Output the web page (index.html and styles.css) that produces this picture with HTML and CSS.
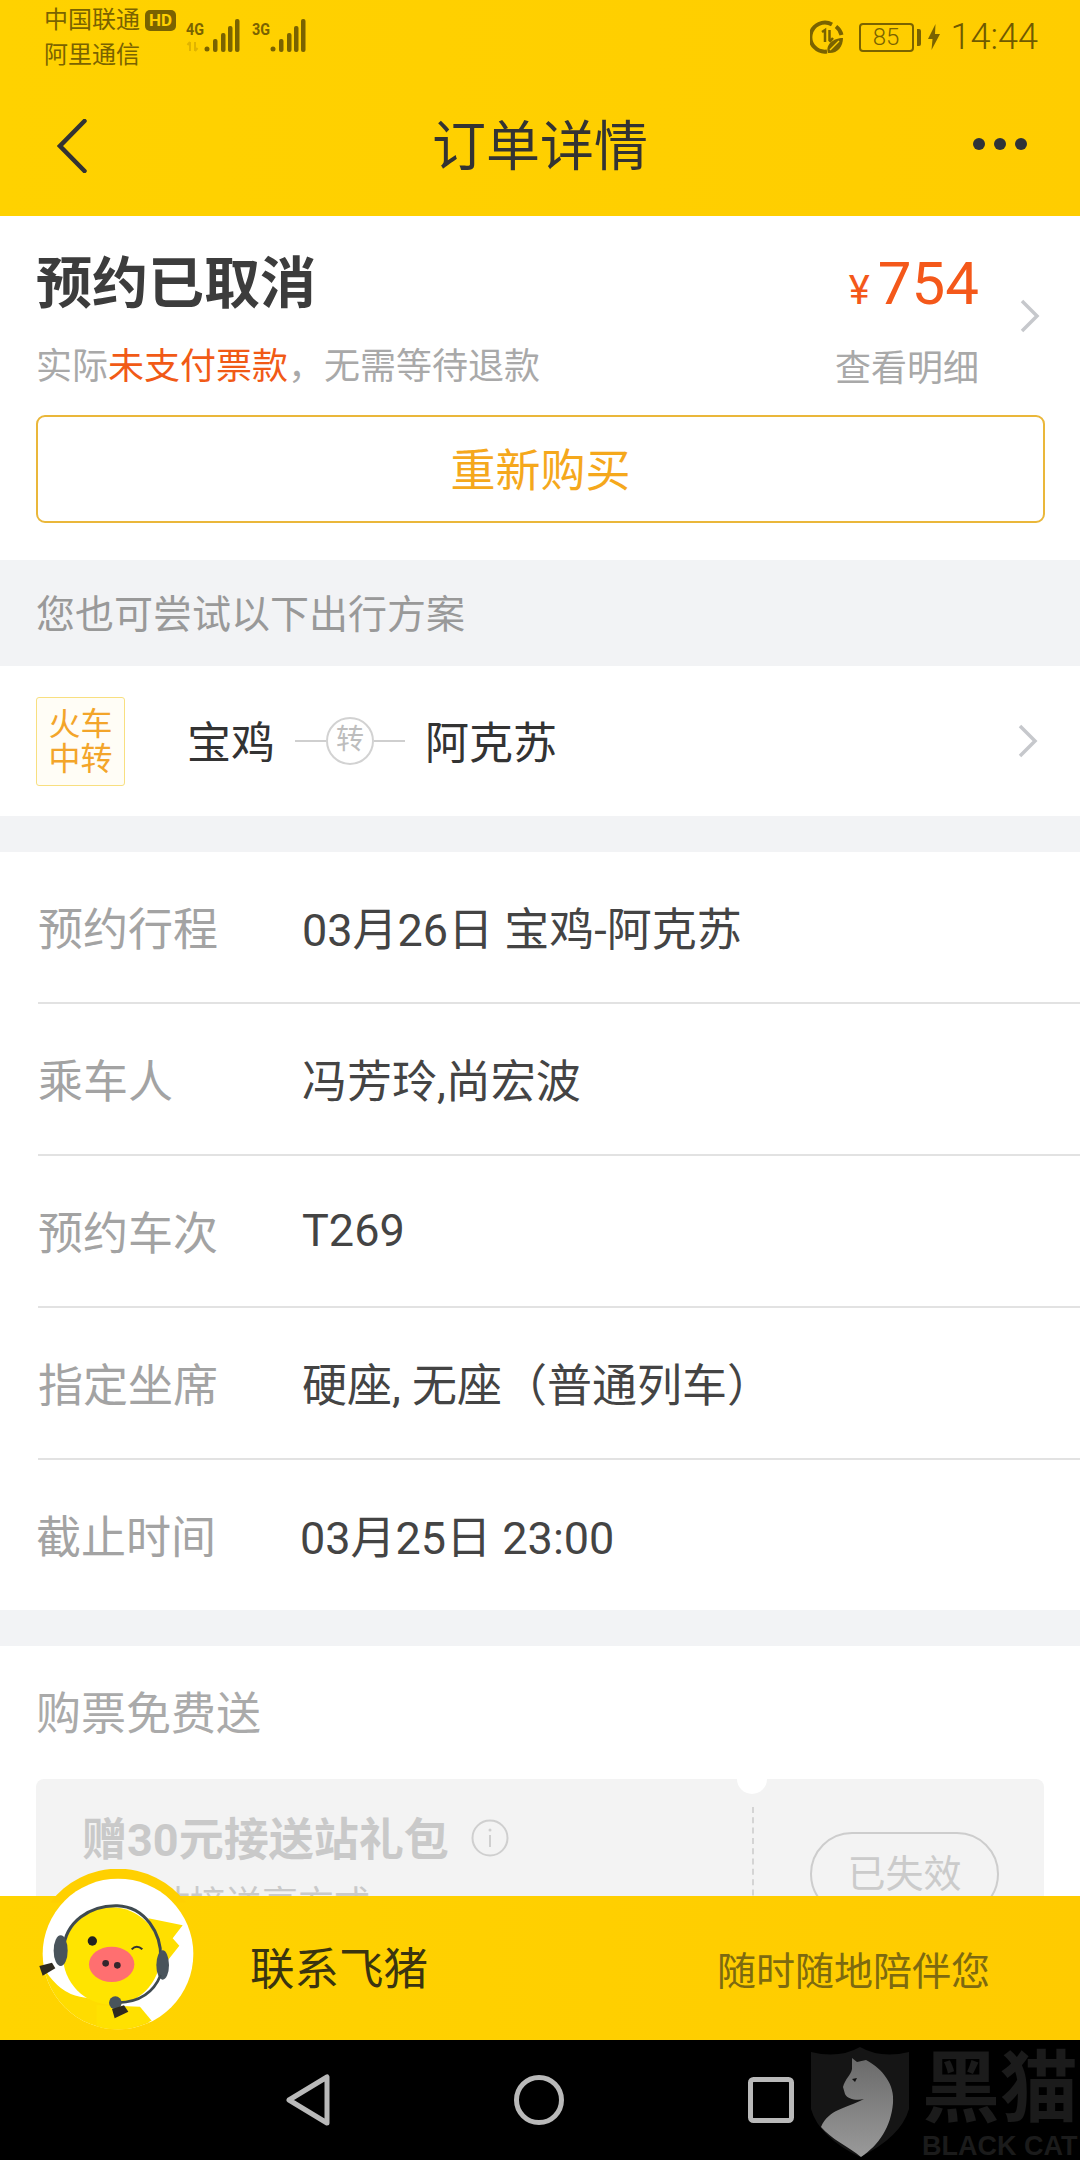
FILE: index.html
```html
<!DOCTYPE html>
<html lang="zh-CN">
<head>
    <meta charset="UTF-8">
    <meta name="viewport" content="width=device-width, initial-scale=1.0">
    <title>订单详情</title>
    <link rel="stylesheet" href="styles.css">
</head>
<body>
<div class="page">
    <header class="top">
        <div class="status-bar">
            <div class="carriers">
                <div class="carrier">中国联通<span class="hd">HD</span></div>
                <div class="carrier">阿里通信</div>
            </div>
            <svg class="signal signal-4g" width="54" height="36" viewBox="0 0 54 36">
                <text x="0" y="17" class="net-type" textLength="18" lengthAdjust="spacingAndGlyphs">4G</text>
                <path d="M4 24v9M1.500 27l2.500-3M9 24v9M9 33l2.500-3" stroke="#e0b400" stroke-width="2" fill="none"/>
                <circle cx="21" cy="31" r="2.500" fill="#7a6300"/>
                <rect x="27" y="21" width="4.500" height="13" rx="2" fill="#7a6300"/>
                <rect x="35" y="15" width="4.500" height="19" rx="2" fill="#7a6300"/>
                <rect x="42" y="8" width="4.500" height="26" rx="2" fill="#7a6300"/>
                <rect x="49" y="1" width="4.500" height="33" rx="2" fill="#7a6300"/>
            </svg>
            <svg class="signal signal-3g" width="54" height="36" viewBox="0 0 54 36">
                <text x="0" y="17" class="net-type" textLength="18" lengthAdjust="spacingAndGlyphs">3G</text>
                <circle cx="21" cy="31" r="2.500" fill="#7a6300"/>
                <rect x="27" y="21" width="4.500" height="13" rx="2" fill="#7a6300"/>
                <rect x="35" y="15" width="4.500" height="19" rx="2" fill="#7a6300"/>
                <rect x="42" y="8" width="4.500" height="26" rx="2" fill="#7a6300"/>
                <rect x="49" y="1" width="4.500" height="33" rx="2" fill="#7a6300"/>
            </svg>
            <div class="status-right">
                <svg class="eco" width="34" height="34" viewBox="0 0 34 34">
                    <path d="M22 4.500A14.500 14.500 0 1 0 17 31.500" stroke="#7a6300" stroke-width="4" fill="none"/>
                    <path d="M26 6.500A14.500 14.500 0 0 1 31.500 15" stroke="#7a6300" stroke-width="4" fill="none"/>
                    <path d="M12 12l3-2v12M19.500 10v11M19.500 22l3.500-4" stroke="#7a6300" stroke-width="2.500" fill="none"/>
                    <path d="M18 33c-3-8 5-15 15-15 0 9-6 16-15 15z" fill="#7a6300"/>
                    <path d="M20 30l9-9" stroke="#ffcf00" stroke-width="1.500"/>
                </svg>
                <div class="battery">85</div>
                <div class="battery-nub"></div>
                <svg class="bolt" width="12" height="26" viewBox="0 0 12 26">
                    <path d="M7.500 0L0 15h4.500L3.500 26 12 10H7z" fill="#7a6300"/>
                </svg>
                <div class="clock">14:44</div>
            </div>
        </div>
        <div class="nav-bar">
            <div class="nav-side">
                <svg class="back" width="30" height="54" viewBox="0 0 30 54">
                    <path d="M27.500 2L3 27l24.500 25" stroke="#333" stroke-width="4.500" stroke-linecap="round" fill="none"/>
                </svg>
            </div>
            <h1 class="page-title">订单详情</h1>
            <div class="nav-side nav-side-right">
                <div class="more"><i></i><i></i><i></i></div>
            </div>
        </div>
    </header>

    <main class="content">
        <section class="order-state">
            <div class="state-head">
                <div class="state-text">
                    <h2>预约已取消</h2>
                    <p>实际<span class="hot">未支付票款</span>，无需等待退款</p>
                </div>
                <div class="price-box">
                    <div class="price"><span class="yen">¥</span>754</div>
                    <div class="detail-link">查看明细</div>
                </div>
                <svg class="chevron" width="20" height="34" viewBox="0 0 20 34">
                    <path d="M2 2l15 15L2 32" stroke="#c6c8cc" stroke-width="3.500" fill="none"/>
                </svg>
            </div>
            <div class="rebuy">重新购买</div>
        </section>

        <div class="tip-band">您也可尝试以下出行方案</div>

        <section class="plan">
            <div class="plan-tag">火车<br>中转</div>
            <span class="plan-city">宝鸡</span>
            <div class="transfer">
                <span class="transfer-line"></span>
                <span class="transfer-mark">转</span>
                <span class="transfer-line"></span>
            </div>
            <span class="plan-city">阿克苏</span>
            <svg class="chevron plan-chevron" width="20" height="34" viewBox="0 0 20 34">
                <path d="M2 2l15 15L2 32" stroke="#c6c8cc" stroke-width="3.500" fill="none"/>
            </svg>
        </section>

        <section class="info">
            <div class="info-row"><span class="info-label">预约行程</span><span class="info-value">03月26日 宝鸡-阿克苏</span></div>
            <div class="info-row"><span class="info-label">乘车人</span><span class="info-value">冯芳玲,尚宏波</span></div>
            <div class="info-row"><span class="info-label">预约车次</span><span class="info-value">T269</span></div>
            <div class="info-row"><span class="info-label">指定坐席</span><span class="info-value">硬座, 无座（普通列车）</span></div>
            <div class="info-row"><span class="info-label">截止时间</span><span class="info-value">03月25日 23:00</span></div>
        </section>

        <section class="gift">
            <h3>购票免费送</h3>
            <div class="coupon">
                <div class="coupon-main">
                    <div class="coupon-title">赠30元接送站礼包
                        <svg class="info-icon" width="38" height="38" viewBox="0 0 38 38">
                            <circle cx="19" cy="19" r="17.500" stroke="#cfcfcf" stroke-width="2" fill="none"/>
                            <path d="M19 16v12" stroke="#cfcfcf" stroke-width="2"/>
                            <circle cx="19" cy="11" r="1.500" fill="#cfcfcf"/>
                        </svg>
                    </div>
                    <div class="coupon-sub">火车站接送享方式</div>
                </div>
                <div class="coupon-side">
                    <div class="coupon-btn">已失效</div>
                </div>
            </div>
        </section>
    </main>

    <footer class="contact">
        <span class="contact-name">联系飞猪</span>
        <span class="contact-slogan">随时随地陪伴您</span>
    </footer>

    <nav class="sys-nav">
        <svg width="44" height="52" viewBox="0 0 44 52"><path d="M3 26L41 3v46z" stroke="#b9b9b9" stroke-width="5" stroke-linejoin="round" fill="none"/></svg>
        <svg width="50" height="50" viewBox="0 0 50 50"><circle cx="25" cy="25" r="22.500" stroke="#b9b9b9" stroke-width="5" fill="none"/></svg>
        <svg width="46" height="46" viewBox="0 0 46 46"><rect x="2.500" y="2.500" width="41" height="41" rx="3" stroke="#b9b9b9" stroke-width="5" fill="none"/></svg>
    </nav>

    <!-- mascot -->
    <svg class="avatar" width="170" height="170" viewBox="9 57 510 510">
        <defs><clipPath id="face-clip"><circle cx="264" cy="312" r="226"/></clipPath></defs>
        <path d="M60 158A255 255 0 0 1 468 158z" fill="#ffd000"/>
        <circle cx="264" cy="312" r="226" fill="#fff"/>
        <g clip-path="url(#face-clip)">
            <path d="M45 360Q90 430 150 440L260 460L360 515L300 560L60 560z" fill="#ffdc00"/>
            <path d="M200 465L330 470L365 512L270 545L200 530z" fill="#ffe100"/>
        </g>
        <path d="M355 205L458 226L428 265L448 287L410 335z" fill="#ffdf00"/>
        <circle cx="245" cy="318" r="146" fill="#ffe400"/>
        <path d="M100 300C105 215 180 165 262 167C345 170 395 250 392 325" stroke="#3f4a50" stroke-width="9" fill="none"/>
        <ellipse cx="92" cy="302" rx="21" ry="46" fill="#49545c"/>
        <ellipse cx="398" cy="345" rx="19" ry="44" fill="#49545c"/>
        <path d="M392 375Q360 455 265 458" stroke="#3f4a50" stroke-width="8" fill="none"/>
        <circle cx="256" cy="458" r="19" fill="#49545c"/>
        <path d="M28 348L66 338L76 355L38 377z" fill="#2f2a20"/>
        <path d="M246 477L282 466L295 485L254 505z" fill="#2f2a20"/>
        <circle cx="187" cy="273" r="14" fill="#222"/>
        <path d="M305 298Q320 282 337 298" stroke="#333" stroke-width="6" fill="none"/>
        <ellipse cx="245" cy="343" rx="68" ry="53" fill="#ff6f70"/>
        <circle cx="227" cy="340" r="10" fill="#35262c"/>
        <circle cx="262" cy="346" r="10" fill="#35262c"/>
    </svg>

    <!-- watermark -->
    <div class="watermark">
        <svg width="98" height="110" viewBox="0 0 98 110">
            <defs>
                <linearGradient id="cat-fill" x1="0" y1="0" x2="0" y2="1">
                    <stop offset="0" stop-color="#6a6a6a"/>
                    <stop offset="1" stop-color="#9a9a9a"/>
                </linearGradient>
            </defs>
            <path d="M0 5Q28 12 49 0Q70 12 98 5L98 62Q90 90 49 110Q8 90 0 62z" fill="#151515"/>
            <path d="M41 11L46 15L55 13C72 22 84 38 82 56C80 80 68 98 50 110C38 100 20 92 10 80C18 62 34 62 53 52C46 54 36 52 34 47L32 40C34 32 40 28 41 22z" fill="url(#cat-fill)"/>
            <path d="M41 32l5-1-2 4z" fill="#111"/>
        </svg>
        <div class="watermark-text">
            <div class="wm-cn">黑猫</div>
            <div class="wm-en">BLACK CAT</div>
        </div>
    </div>
</div>
</body>
</html>
```
FILE: styles.css
```css
*{
    margin: 0;
    padding: 0;
    box-sizing: border-box;
}
body{
    font-family: Roboto, "Noto Sans CJK SC", sans-serif;
    background-color: #fff;
}
.page{
    position: relative;
    width: 1080px;
    height: 2160px;
    display: flex;
    flex-direction: column;
    overflow: hidden;
}

/* top */
.top{
    height: 216px;
    flex: none;
    background: linear-gradient(to right, #ffd200, #ffcd00);
}
.status-bar{
    height: 72px;
    display: flex;
    align-items: flex-start;
    padding: 4px 42px 0 44px;
    color: #7a6300;
}
.carriers{
    width: 142px;
}
.carrier{
    font-size: 24px;
    line-height: 34px;
    white-space: nowrap;
    display: flex;
    align-items: center;
}
.carrier:first-child{
    margin-top: -1px;
}
.carrier:last-child{
    margin-top: 1px;
}
.hd{
    margin-left: 5px;
    width: 31px;
    height: 21px;
    border-radius: 5px;
    background-color: #7a6300;
    color: #ffd000;
    font-size: 17px;
    font-weight: 700;
    line-height: 21px;
    text-align: center;
}
.signal{
    margin-top: 14px;
}
.signal-3g{
    margin-left: 12px;
}
.net-type{
    font-size: 17px;
    font-weight: 700;
    fill: #7a6300;
}
.status-right{
    margin-left: auto;
    display: flex;
    align-items: center;
    height: 66px;
    color: #7a6300;
}
.eco{
    margin-right: 15px;
}
.battery{
    width: 55px;
    height: 29px;
    border: 2px solid #7a6300;
    border-radius: 4px;
    font-size: 24px;
    font-weight: 300;
    line-height: 25px;
    text-align: center;
}
.battery-nub{
    width: 4px;
    height: 17px;
    margin-left: 3px;
    background-color: #7a6300;
    border-radius: 0 2px 2px 0;
}
.bolt{
    margin-left: 7px;
}
.clock{
    margin-left: 11px;
    font-size: 36px;
    font-weight: 300;
    color: #6f5a00;
}
.nav-bar{
    height: 144px;
    display: flex;
    align-items: center;
    padding: 0 53px 0 57px;
}
.nav-side{
    flex: 1;
    display: flex;
}
.nav-side-right{
    justify-content: flex-end;
}
.back{
    margin-top: 4px;
}
.page-title{
    font-size: 54px;
    font-weight: 400;
    line-height: 72px;
    color: #333;
    margin: 8px 4px 0 0;
}
.more{
    display: flex;
    gap: 9px;
    margin-top: 0;
}
.more i{
    display: block;
    width: 12px;
    height: 12px;
    border-radius: 50%;
    background-color: #2f3338;
}

/* scrolling part */
.content{
    flex: 1;
    overflow: hidden;
    background-color: #f2f3f5;
}
.order-state{
    height: 344px;
    background-color: #fff;
    padding: 30px 35px 0 36px;
}
.state-head{
    position: relative;
    height: 169px;
    display: flex;
    justify-content: space-between;
}
.state-text h2{
    font-size: 56px;
    font-weight: 700;
    line-height: 76px;
    color: #3c3c3c;
}
.state-text p{
    font-size: 36px;
    line-height: 50px;
    margin-top: 20px;
    color: #a9a9a9;
}
.hot{
    color: #f15a16;
}
.price-box{
    position: absolute;
    right: 66px;
    top: 0;
    text-align: right;
}
.price{
    font-size: 60px;
    line-height: 72px;
    margin-top: 2px;
    color: #f4581a;
}
.yen{
    font-size: 40px;
    margin-right: 8px;
}
.detail-link{
    font-size: 36px;
    line-height: 50px;
    margin-top: 17px;
    color: #a9a9a9;
}
.chevron{
    flex: none;
}
.state-head .chevron{
    position: absolute;
    right: 5px;
    top: 53px;
}
.rebuy{
    height: 108px;
    border: 2px solid #eab73a;
    border-radius: 9px;
    font-size: 45px;
    line-height: 110px;
    text-align: center;
    color: #f5a81c;
}
.tip-band{
    height: 106px;
    padding-left: 36px;
    font-size: 39px;
    line-height: 110px;
    color: #999;
}
.plan{
    height: 150px;
    background-color: #fff;
    display: flex;
    align-items: center;
    padding-left: 36px;
    margin-bottom: 36px;
}
.plan-tag{
    width: 89px;
    height: 89px;
    margin-right: 62px;
    border: 1px solid #f8df80;
    border-radius: 3px;
    background-color: #fffdf6;
    font-size: 32px;
    line-height: 35px;
    padding-top: 9px;
    text-align: center;
    color: #f3a52a;
}
.plan-city{
    font-size: 44px;
    color: #333;
    line-height: 60px;
    margin-top: 6px;
}
.transfer{
    display: flex;
    align-items: center;
    margin: 0 20px 0 20px;
}
.transfer-line{
    width: 31px;
    height: 2px;
    background-color: #cfcfcf;
}
.transfer-mark{
    width: 48px;
    height: 48px;
    border: 2px solid #d2d2d2;
    border-radius: 50%;
    font-size: 28px;
    line-height: 42px;
    text-align: center;
    color: #bdbdbd;
}
.plan-chevron{
    margin-left: auto;
    margin-right: 42px;
}
.info{
    height: 758px;
    background-color: #fff;
    padding-left: 38px;
    margin-bottom: 36px;
}
.info-row{
    height: 152px;
    border-bottom: 2px solid #e2e2e2;
    display: flex;
    align-items: center;
    font-size: 45px;
    padding-bottom: 2px;
}
.info-row:last-child{
    border-bottom: none;
    margin-left: -2px;
    padding-bottom: 4px;
}
.info-label{
    width: 264px;
    color: #a3a3a3;
}
.info-value{
    color: #444;
}
.gift{
    background-color: #fff;
    padding: 38px 36px 60px;
    height: 500px;
}
.gift h3{
    font-size: 45px;
    font-weight: 400;
    line-height: 62px;
    color: #aaa;
}
.coupon{
    position: relative;
    margin-top: 33px;
    height: 200px;
    border-radius: 8px;
    background-color: #f3f3f3;
    display: flex;
}
/* ticket notch */
.coupon::before{
    content: "";
    position: absolute;
    left: 701px;
    top: -15px;
    width: 30px;
    height: 30px;
    border-radius: 50%;
    background-color: #fff;
}
.coupon-main{
    width: 716px;
    padding: 29px 0 0 46px;
}
.coupon-title{
    display: flex;
    align-items: center;
    font-size: 45px;
    font-weight: 700;
    line-height: 66px;
    color: #c9c9c9;
}
.info-icon{
    margin-left: 22px;
    margin-top: -6px;
}
.coupon-sub{
    font-size: 36px;
    line-height: 50px;
    margin-top: 6px;
    color: #c9c9c9;
}
.coupon-side{
    flex: 1;
    margin-top: 28px;
    border-left: 2px dashed #d4d4d4;
    height: 140px;
}
.coupon-btn{
    width: 189px;
    height: 84px;
    margin: 25px 0 0 56px;
    border: 2px solid #cdcdcd;
    border-radius: 42px;
    font-size: 38px;
    line-height: 80px;
    text-align: center;
    color: #cbcbcb;
}

/* bottom */
.contact{
    position: relative;
    z-index: 1;
    height: 144px;
    flex: none;
    display: flex;
    align-items: center;
    padding-left: 250px;
    background: linear-gradient(to right, #ffd400, #ffcb00);
}
.contact-name{
    font-size: 44.500px;
    color: #3a3410;
    margin-bottom: 6px;
}
.contact-slogan{
    margin-left: auto;
    margin-right: 90px;
    font-size: 39px;
    color: #7d6a10;
}
.sys-nav{
    height: 120px;
    flex: none;
    background-color: #000;
    display: flex;
    align-items: center;
    padding-left: 286px;
    gap: 184px;
}
.avatar{
    position: absolute;
    left: 33px;
    top: 1869px;
    z-index: 2;
}
.watermark{
    position: absolute;
    left: 811px;
    top: 2047px;
    display: flex;
    white-space: nowrap;
}
.watermark-text{
    margin-left: 13px;
    font-family: "Liberation Sans", "Noto Sans CJK SC", sans-serif;
    font-weight: 700;
    color: #1b1b1b;
}
.wm-cn{
    font-size: 78px;
    line-height: 84px;
}
.wm-en{
    font-size: 27px;
    line-height: 30px;
}
```
